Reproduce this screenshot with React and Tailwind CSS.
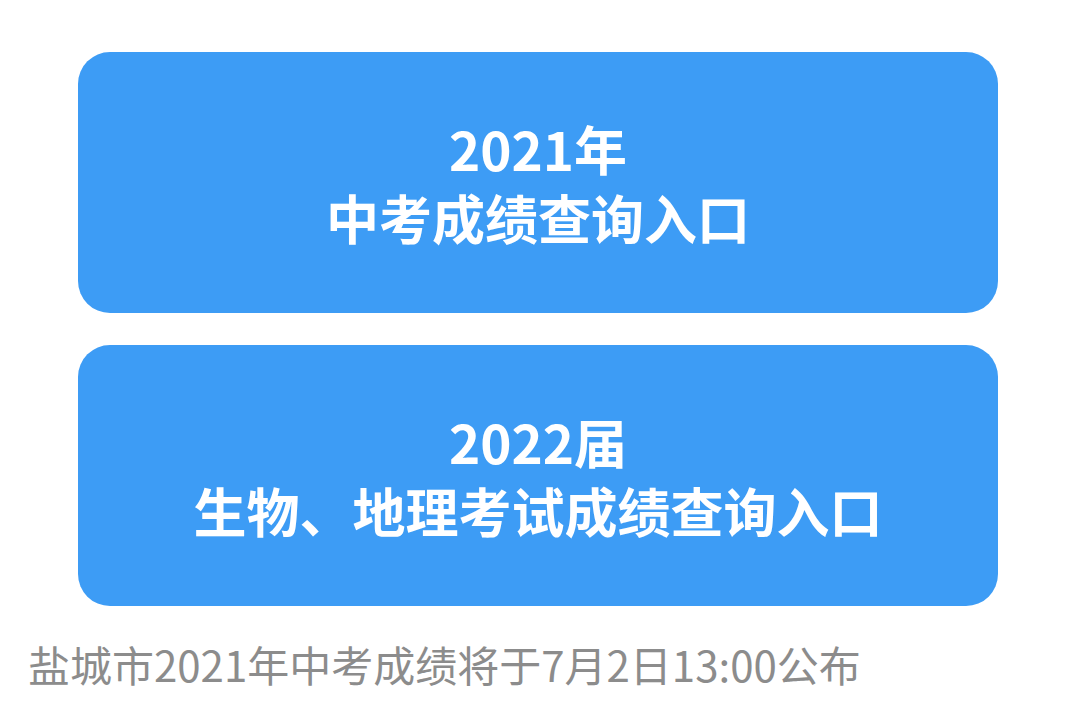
const cards = [
  { title: '2021年', subtitle: '中考成绩查询入口' },
  { title: '2022届', subtitle: '生物、地理考试成绩查询入口' },
];

function EntryCard({ title, subtitle }) {
  return (
    <div className="flex h-[261px] flex-col items-center justify-center rounded-[32px] bg-[#3d9cf5] text-white">
      <div className="text-[53px] font-bold leading-[69px]">{title}</div>
      <div className="text-[53px] font-bold leading-[69px]">{subtitle}</div>
    </div>
  );
}

export default function App() {
  return (
    <div
      className="h-[707px] w-[1070px] overflow-hidden bg-white"
      style={{ fontFamily: '"Noto Sans CJK SC", "Noto Sans", sans-serif' }}
    >
      <div className="flex flex-col gap-[32px] pl-[78px] pr-[72px] pt-[52px]">
        {cards.map((c) => (
          <EntryCard key={c.title} {...c} />
        ))}
      </div>
      <p className="mt-[30px] pl-[28px] text-[42px] leading-[56px] text-[#8c8c8c]">
        盐城市2021年中考成绩将于7月2日13:00公布
      </p>
    </div>
  );
}
